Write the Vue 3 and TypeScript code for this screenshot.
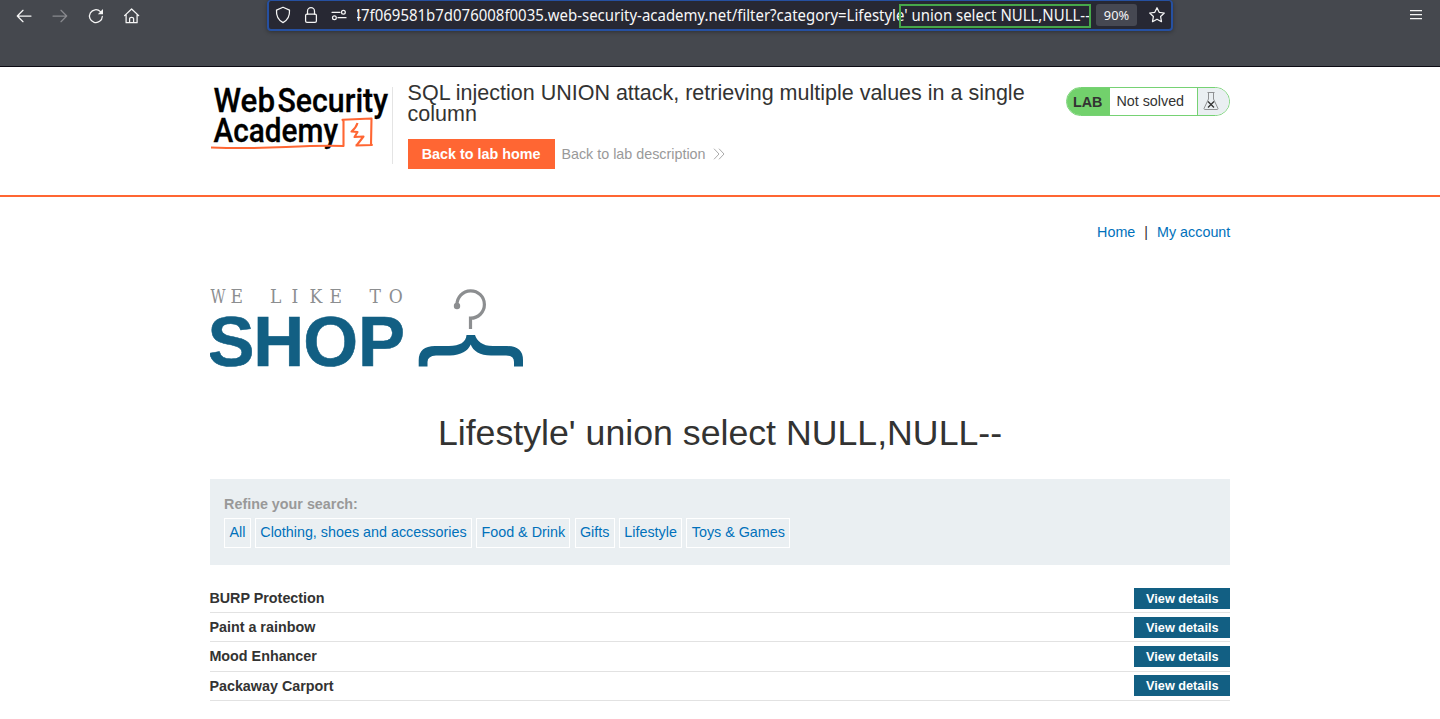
<script setup lang="ts">
const categories: string[] = ['All', 'Clothing, shoes and accessories', 'Food & Drink', 'Gifts', 'Lifestyle', 'Toys & Games']
const products: string[] = ['BURP Protection', 'Paint a rainbow', 'Mood Enhancer', 'Packaway Carport']
</script>

<template>
  <div class="page">
    <div class="chrome">
      <div class="nav-icons">
        <svg width="16" height="16" viewBox="0 0 16 16" class="ico"><path d="M15 8H1.5M7 2.3L1.3 8L7 13.7" /></svg>
        <svg width="16" height="16" viewBox="0 0 16 16" class="ico dim"><path d="M1 8H14.5M9 2.3L14.7 8L9 13.7" /></svg>
        <svg width="16" height="16" viewBox="0 0 16 16" class="ico"><path d="M14.3 8.4A6.4 6.4 0 1 1 12.4 3.6" /><path class="fill" d="M15 1V6.2H9.8Z" /></svg>
        <svg width="16" height="16" viewBox="0 0 16 16" class="ico"><path d="M.6 7.6L7.6 1L14.7 7.6M2.1 6.3V14.7H13.1V6.3M5.6 14.5V10.6Q5.6 9.3 7.6 9.3T9.6 10.6V14.5" /></svg>
      </div>
      <div class="urlbar">
        <svg width="16" height="18" viewBox="0 0 16 18" class="ico shield"><path d="M8 1.2L14.5 4.1Q15.1 12.8 8 16.6Q.9 12.8 1.5 4.1Z" /></svg>
        <svg width="14" height="18" viewBox="0 0 14 18" class="ico lock"><rect x="1.6" y="8.2" width="10.8" height="8.1" rx="1.4" /><path d="M3.5 8V5.2A3.5 3.5 0 0 1 10.5 5.2V8" /></svg>
        <svg width="16" height="12" viewBox="0 0 16 12" class="ico perm"><path d="M1 3.3H9M7 8.7H15" /><circle cx="12.4" cy="3.3" r="1.9" /><circle cx="3.4" cy="8.7" r="1.9" /></svg>
        <svg class="url" width="736" height="26" viewBox="0 0 736 26">
          <text x="-4.5" y="19.4" textLength="737.5" lengthAdjust="spacingAndGlyphs">47f069581b7d076008f0035.web-security-academy.net/filter?category=Lifestyle' union select NULL,NULL--</text>
        </svg>
        <span class="mark"></span>
        <span class="zoom">90%</span>
        <svg width="18" height="18" viewBox="0 0 18 18" class="ico star"><path d="M9 1.7L11.2 6.3L16.3 7L12.6 10.5L13.5 15.7L9 13.2L4.5 15.7L5.4 10.5L1.7 7L6.8 6.3Z" /></svg>
      </div>
      <svg class="menu" width="12" height="12" viewBox="0 0 12 12"><path d="M0 1.7H12M0 5.7H12M0 9.7H12" /></svg>
    </div>

    <header class="lab-header">
      <div class="wrap head">
        <svg class="logo" width="182" height="70" viewBox="0 0 182 70">
          <g class="word">
            <text x="3.5" y="25" textLength="61.5" lengthAdjust="spacingAndGlyphs">Web</text>
            <text x="67.5" y="25" textLength="110.5" lengthAdjust="spacingAndGlyphs">Security</text>
            <text x="3.5" y="54.7" textLength="124.5" lengthAdjust="spacingAndGlyphs">Academy</text>
          </g>
          <g class="scribble">
            <path d="M1 60.5Q38 61.8 76 60T133.5 59L133.5 34L132.5 32.8L161.5 31.5L161 57L161.8 58L145.500 58.5" />
            <path d="M147.5 36Q146 41 141.5 44.5L147.5 45L144.5 50L153.5 49.5L146.5 58.5" />
          </g>
        </svg>
        <div class="info">
          <h2>SQL injection UNION attack, retrieving multiple values in a single column</h2>
          <div class="actions">
            <a class="lab-home">Back to lab home</a>
            <a class="lab-desc">Back to lab description</a>
            <svg class="chev" width="12" height="12" viewBox="0 0 12 12"><path d="M1 .7L6 6L1 11.3M6 .7L11 6L6 11.3" /></svg>
          </div>
        </div>
        <div class="status">
          <b>LAB</b>
          <span>Not solved</span>
          <i><svg width="16" height="20" viewBox="0 0 16 20"><path d="M4.5 1.5H11.5M5.5 2V8L1 17.5Q1 18.5 2 18.5H14Q15 18.5 15 17.5L10.5 8V2" /><path class="x" d="M5 10.5L11 16.5M11 10.5L5 16.5" /></svg></i>
        </div>
      </div>
    </header>

    <main class="wrap">
      <nav class="account"><a>Home</a><span>|</span><a>My account</a></nav>
      <svg class="shop" width="316" height="84" viewBox="0 0 316 84">
        <g class="slogan">
          <text x="0.5" y="17.3" textLength="15" lengthAdjust="spacingAndGlyphs">W</text>
          <text x="20.5 60 81.5 99.5 119.5 159.5 178.7" y="17.3">ELIKETO</text>
        </g>
        <text class="big" x="-2.5 43.3 93.3 148" y="80.3">SHOP</text>
        <circle cx="247" cy="20" r="3.2" fill="#8c8e90" />
        <path d="M247 19A13.7 13.7 0 1 1 260.5 32.2V43" fill="none" stroke="#8c8e90" stroke-width="3.2" />
        <path fill="#125f83" d="M256.5 49H265C267 55 272 60 283 60H297Q313 60 313 74V80.5H304V76Q304 69.5 296 69.5H281C270 69.5 263 65 260.7 58.5C258 65 251 69 240 69.5H226Q217.5 70 217.5 76V80.5H208.7V74Q209 60 225 60H239C250 60 256 56 256.5 49Z" />
      </svg>
      <h1>Lifestyle' union select NULL,NULL--</h1>
      <section class="filters">
        <label>Refine your search:</label>
        <div class="tags"><a v-for="c in categories" :key="c">{{ c }}</a></div>
      </section>
      <section class="list">
        <div v-for="p in products" :key="p" class="row"><span>{{ p }}</span><a>View details</a></div>
      </section>
    </main>
  </div>
</template>

<style>
body { margin: 0; overflow: hidden; background: #fff; }
</style>

<style scoped>
.page { width: 1440px; height: 719px; overflow: hidden; font-family: "Liberation Sans", Arial, sans-serif; font-size: 14.34px; color: #333332; box-sizing: border-box; }
.page * { box-sizing: border-box; }
.page svg { flex: none; display: block; }
.chrome { height: 67px; background: #45484e; border-bottom: 1px solid #0c0b14; position: relative; display: flex; align-items: flex-start; }
.nav-icons { display: flex; gap: 20px; padding: 8px 0 0 16px; width: 267px; flex: none; }
.ico { fill: none; stroke: #f5f5f5; stroke-width: 1.25; stroke-linecap: round; stroke-linejoin: round; }
.ico.dim { stroke: #88898e; }
.ico .fill { fill: #f5f5f5; stroke: none; }
.urlbar { width: 906px; height: 31px; background: #272833; border: 2px solid #2650a0; border-top-width: 1px; border-radius: 4px; position: relative; display: flex; align-items: center; box-shadow: 0 1px 4px rgba(0, 0, 0, .35); }
.shield { margin-left: 6px; }
.lock { margin-left: 13px; }
.perm { margin-left: 13px; }
.url { margin-left: 10px; overflow: hidden; }
.url text { font: 15.6px "Noto Sans", sans-serif; fill: #f7f7f8; }
.mark { position: absolute; left: 630px; top: 3px; width: 192px; height: 24px; border: 2px solid #46a84a; }
.zoom { width: 41px; height: 22px; margin-left: 3px; border-radius: 3px; background: #464852; color: #f5f5f6; font: 12.8px/23px "Noto Sans", sans-serif; text-align: center; flex: none; }
.star { margin-left: 11px; }
.menu { margin: 9px 0 0 237px; stroke: #f5f5f5; stroke-width: 1.3; }
.wrap { width: 1020.6px; margin: 0 auto; }
.lab-header { height: 130px; border-bottom: 2px solid #ff6633; }
.head { display: flex; align-items: flex-start; padding-top: 15px; }
.page .logo { margin-top: 5px; overflow: visible; }
.word text { font: 500 33px Roboto, sans-serif; fill: #000; stroke: #000; stroke-width: .3; }
.scribble path { fill: none; stroke: #ff6633; stroke-width: 2.1; stroke-linejoin: round; }
.info { width: 659px; height: 77px; margin-top: 5px; margin-left: .5px; border-left: 1px solid #e4e4e4; padding-left: 14.4px; }
h2 { font-size: 21.5px; line-height: 21px; font-weight: 400; margin: -4px 0 0; width: 640px; }
.actions { display: flex; align-items: center; margin-top: 14px; }
.lab-home { height: 30px; width: 147px; line-height: 30px; text-align: center; font-weight: 700; color: #fff; background: #ff6633; }
.lab-desc { margin-left: 6.8px; color: #999; }
.chev { margin-left: 7px; fill: none; stroke: #aaa; stroke-width: 1; }
.status { margin-left: auto; margin-top: 5px; width: 164.3px; height: 29px; border: 1px solid #76d274; border-radius: 14.5px; overflow: hidden; display: flex; line-height: 27px; }
.status b { width: 43px; background: #72d16c; padding-left: 6px; line-height: 29px; }
.status span { width: 88px; border-right: 1px solid #76d274; padding-left: 6.4px; }
.status i { flex: 1; background: #eaeff2; padding: 3px 0 0 4.5px; }
.status path { fill: none; stroke: #8f9193; stroke-width: 1; }
.status .x { stroke: #333; stroke-width: 1.3; }
.account { display: flex; justify-content: flex-end; line-height: 18px; padding-top: 26px; }
.account span { margin: 0 9px; }
.account a, .tags a { color: #0071bb; }
.shop { margin-top: 45px; }
.slogan text { font: 19px "DejaVu Serif Condensed", "DejaVu Serif", serif; font-stretch: condensed; fill: #8c8e90; }
.big { font: 700 70.5px "Liberation Sans", sans-serif; fill: #125f83; stroke: #125f83; stroke-width: .6; }
h1 { margin: 42px 0 0; font-size: 35.7px; line-height: 42px; font-weight: 400; text-align: center; }
.filters { margin-top: 25px; height: 86px; background: #eaeff2; padding: 16px 14.4px; }
.filters label { display: block; font-weight: 700; color: #999; line-height: 18px; }
.tags { display: flex; gap: 4.1px; margin-top: 5px; }
.tags a { border: 1px solid #fff; height: 30px; line-height: 27px; padding: 0 4.4px; }
.list { padding-top: 18.8px; }
.row { height: 29.25px; border-bottom: 1px solid #e2e2e2; display: flex; justify-content: space-between; font-weight: 700; line-height: 28.8px; }
.row span { margin-left: -.3px; }
.row a { background: #125f83; color: #fff; width: 96px; height: 21px; margin-top: 3.9px; line-height: 22px; font-size: 12.7px; text-align: center; }
</style>
